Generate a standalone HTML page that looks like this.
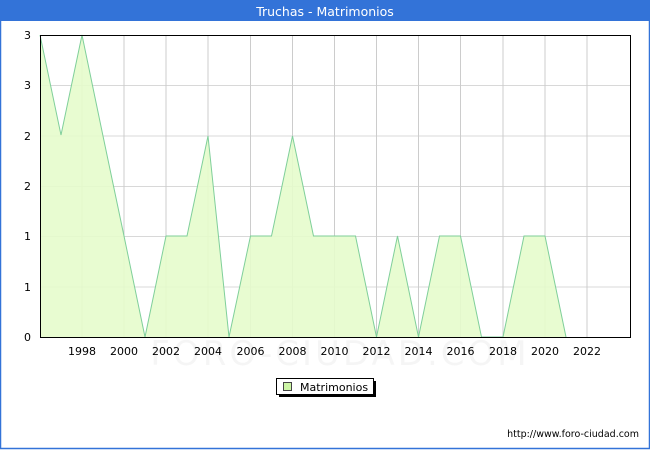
<!DOCTYPE html>
<html><head><meta charset="utf-8"><style>
html,body{margin:0;padding:0;background:#fff;}
svg{display:block;font-family:"DejaVu Sans","Liberation Sans",sans-serif;}
</style></head><body>
<svg width="650" height="450" viewBox="0 0 650 450" xmlns="http://www.w3.org/2000/svg">
<rect x="0" y="0" width="650" height="450" fill="#fff"/>
<rect x="0.5" y="0.5" width="649" height="448" fill="none" stroke="#3373d8" stroke-width="1.5"/>
<rect x="0" y="0" width="650" height="21" fill="#3373d8"/>
<text x="325" y="16" text-anchor="middle" font-size="12.5" fill="#fff">Truchas - Matrimonios</text>
<g stroke="#d8d8d8" stroke-width="1">
<line x1="40" y1="85.5" x2="630" y2="85.5"/><line x1="40" y1="136" x2="630" y2="136"/><line x1="40" y1="186.5" x2="630" y2="186.5"/><line x1="40" y1="236.5" x2="630" y2="236.5"/><line x1="40" y1="287" x2="630" y2="287"/>
</g>
<g stroke="#cccccc" stroke-width="1">
<line x1="82" y1="35" x2="82" y2="337"/><line x1="124" y1="35" x2="124" y2="337"/><line x1="166" y1="35" x2="166" y2="337"/><line x1="208" y1="35" x2="208" y2="337"/><line x1="250.5" y1="35" x2="250.5" y2="337"/><line x1="292.5" y1="35" x2="292.5" y2="337"/><line x1="334.5" y1="35" x2="334.5" y2="337"/><line x1="376.5" y1="35" x2="376.5" y2="337"/><line x1="418.5" y1="35" x2="418.5" y2="337"/><line x1="460.5" y1="35" x2="460.5" y2="337"/><line x1="503" y1="35" x2="503" y2="337"/><line x1="545" y1="35" x2="545" y2="337"/><line x1="587" y1="35" x2="587" y2="337"/>
</g>
<polygon fill="#e6fccc" fill-opacity="0.9" stroke="none"
points="40,35 61,135 82,35 103,136 124,236 145,337 166,236 187,236 208,136 229,337 250.5,236 271.5,236 292.5,136 313.5,236 334.5,236 355.5,236 376.5,337 397.5,236 418.5,337 439.5,236 460.5,236 481.5,337 503,337 524,236 545,236 566,337 40,337"/>
<polyline fill="none" stroke="#7fcf9a" stroke-width="1"
points="40,35 61,135 82,35 103,136 124,236 145,337 166,236 187,236 208,136 229,337 250.5,236 271.5,236 292.5,136 313.5,236 334.5,236 355.5,236 376.5,337 397.5,236 418.5,337 439.5,236 460.5,236 481.5,337 503,337 524,236 545,236 566,337"/>
<rect x="40.5" y="35.5" width="590" height="302" fill="none" stroke="#000" stroke-width="1"/>
<text x="340" y="365" text-anchor="middle" font-size="34" fill="#000" fill-opacity="0.04" letter-spacing="3">FORO-CIUDAD.COM</text>
<g font-size="11" fill="#000" text-anchor="end">
<text x="31" y="39">3</text><text x="31" y="89">3</text><text x="31" y="140">2</text><text x="31" y="190">2</text><text x="31" y="240">1</text><text x="31" y="291">1</text><text x="31" y="341">0</text>
</g>
<g font-size="11" fill="#000" text-anchor="middle">
<text x="82" y="355">1998</text><text x="124" y="355">2000</text><text x="166" y="355">2002</text><text x="208" y="355">2004</text><text x="250.5" y="355">2006</text><text x="292.5" y="355">2008</text><text x="334.5" y="355">2010</text><text x="376.5" y="355">2012</text><text x="418.5" y="355">2014</text><text x="460.5" y="355">2016</text><text x="503" y="355">2018</text><text x="545" y="355">2020</text><text x="587" y="355">2022</text>
</g>
<rect x="279" y="381" width="97" height="16" fill="#000"/>
<rect x="276.5" y="378.5" width="97" height="16" fill="#fff" stroke="#000" stroke-width="1"/>
<rect x="283.5" y="382.5" width="8" height="8" fill="#ccf5a5" stroke="#444" stroke-width="1"/>
<text x="300" y="391" font-size="11" fill="#000">Matrimonios</text>
<text x="639" y="437" text-anchor="end" font-size="9.5" fill="#000">http://www.foro-ciudad.com</text>
</svg>
</body></html>
